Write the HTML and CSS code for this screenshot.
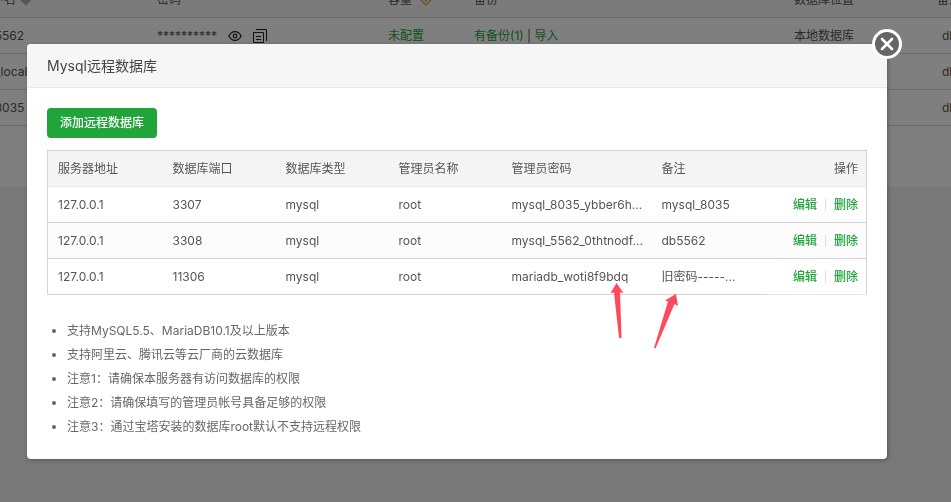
FILE: index.html
```html
<!DOCTYPE html>
<html lang="zh-CN">
<head>
  <meta charset="UTF-8">
  <title>Mysql远程数据库</title>
  <link rel="stylesheet" href="styles.css">
</head>
<body>
  <main class="page">
    <table class="db-list">
      <colgroup>
        <col class="col-name">
        <col class="col-pass">
        <col class="col-quota">
        <col class="col-backup">
        <col class="col-place">
        <col class="col-note">
      </colgroup>
      <thead>
        <tr>
          <th>用户名 <span class="sort">◆</span></th>
          <th>密码</th>
          <th>容量
            <svg class="gem" width="14" height="12" viewBox="0 0 14 12" fill="none" stroke="#d9a860" stroke-width="1.4"><path d="M3.5 .7h7l2.8 3.8L7 11 .7 4.5zM4.500 4.500h5L7 7z"/></svg>
          </th>
          <th>备份</th>
          <th>数据库位置</th>
          <th>备注</th>
        </tr>
      </thead>
      <tbody>
        <tr>
          <td>db5562</td>
          <td>
            <span class="secret">
              <span>**********</span>
              <svg width="14" height="12" viewBox="0 0 14 12" fill="none" stroke="#222" stroke-width="1.2"><path d="M.8 6C2.3 3.2 4.5 1.6 7 1.6S11.7 3.2 13.2 6C11.7 8.8 9.5 10.4 7 10.4S2.3 8.8.8 6z"/><circle cx="7" cy="6" r="1.8"/></svg>
              <svg width="14" height="14" viewBox="0 0 14 14" fill="none" stroke="#222"><path d="M.5 3.5h10v10H.5zM3 .5h10.5V12M3 7.5h5M3 10.5h5"/></svg>
            </span>
          </td>
          <td><a href="#">未配置</a></td>
          <td><a href="#">有备份(1)</a> | <a href="#">导入</a></td>
          <td>本地数据库</td>
          <td class="note">db5562</td>
        </tr>
        <tr>
          <td>db_local</td>
          <td></td>
          <td></td>
          <td></td>
          <td></td>
          <td class="note">db_local</td>
        </tr>
        <tr>
          <td>db8035</td>
          <td></td>
          <td></td>
          <td></td>
          <td></td>
          <td class="note">db8035</td>
        </tr>
      </tbody>
    </table>
  </main>

  <div class="overlay">
    <section class="modal" role="dialog" aria-labelledby="modal-title">
      <h1 class="modal-title" id="modal-title">Mysql远程数据库</h1>
      <button class="close" type="button" aria-label="关闭">
        <svg width="14" height="14" viewBox="0 0 14 14" stroke="#fff" stroke-width="2.6" stroke-linecap="round"><path d="M2 2l10 10M12 2L2 12"/></svg>
      </button>

      <div class="modal-body">
        <button class="add" type="button">添加远程数据库</button>

        <table class="servers">
          <colgroup>
            <col class="col-host">
            <col class="col-short">
            <col class="col-short">
            <col class="col-short">
            <col class="col-password">
            <col>
            <col class="col-action">
          </colgroup>
          <thead>
            <tr>
              <th>服务器地址</th>
              <th>数据库端口</th>
              <th>数据库类型</th>
              <th>管理员名称</th>
              <th>管理员密码</th>
              <th>备注</th>
              <th class="action">操作</th>
            </tr>
          </thead>
          <tbody>
            <tr>
              <td>127.0.0.1</td>
              <td>3307</td>
              <td>mysql</td>
              <td>root</td>
              <td>mysql_8035_ybber6h...</td>
              <td>mysql_8035</td>
              <td class="action"><a href="#">编辑</a><span class="sep"></span><a href="#">删除</a></td>
            </tr>
            <tr>
              <td>127.0.0.1</td>
              <td>3308</td>
              <td>mysql</td>
              <td>root</td>
              <td>mysql_5562_0thtnodf...</td>
              <td>db5562</td>
              <td class="action"><a href="#">编辑</a><span class="sep"></span><a href="#">删除</a></td>
            </tr>
            <tr>
              <td>127.0.0.1</td>
              <td>11306</td>
              <td>mysql</td>
              <td>root</td>
              <td>mariadb_woti8f9bdq</td>
              <td>旧密码-----...</td>
              <td class="action"><a href="#">编辑</a><span class="sep"></span><a href="#">删除</a></td>
            </tr>
          </tbody>
        </table>

        <ul class="tips">
          <li>支持MySQL5.5、MariaDB10.1及以上版本</li>
          <li>支持阿里云、腾讯云等云厂商的云数据库</li>
          <li>注意1：请确保本服务器有访问数据库的权限</li>
          <li>注意2：请确保填写的管理员帐号具备足够的权限</li>
          <li>注意3：通过宝塔安装的数据库root默认不支持远程权限</li>
        </ul>
      </div>

      <svg class="arrows" width="70" height="68" viewBox="0 0 70 68" fill="#ff4a5e">
        <path d="M15.5 0L22.5 10 19 9.5 20.5 54.500Q19.5 56 18 54.5L13 9.5 9.5 10z"/>
        <path d="M75 11L77 23 73.5 21 54.5 65.5 53 65 67 18.5 64 17.5z"/>
      </svg>
    </section>
  </div>
</body>
</html>
```

FILE: styles.css
```css
* {
  box-sizing: border-box;
}
body {
  margin: 0;
  min-height: 100vh;
  overflow: hidden;
  background: #f0f0f0;
  color: #555;
  font: 12px/20px Inter, "Noto Sans CJK SC", sans-serif;
}
a {
  color: #20a53a;
  text-decoration: none;
}
table {
  border-collapse: collapse;
  table-layout: fixed;
}
th, td {
  height: 36px;
  padding: 0 10px;
  font-weight: 400;
  text-align: left;
  white-space: nowrap;
}

/* database list behind the dialog, scrolled by a few pixels */
.page {
  margin: -19px 0 0 -30px;
  padding-bottom: 60px;
  overflow: hidden;
  background: #fff;
}
.db-list {
  width: calc(100% + 100px);
}
.db-list th,
.db-list td {
  padding-top: 2px;
}
.db-list th {
  background: #f6f6f6;
}
.db-list tr {
  border-bottom: 1px solid #d3d3d3;
}
.col-name { width: 177px; }
.col-pass { width: 231px; }
.col-quota { width: 86px; }
.col-backup { width: 320px; }
.col-place { width: 143px; }
.db-list .note {
  padding-left: 15px;
}
.sort {
  color: #aaa;
}
.gem {
  margin-left: 4px;
  vertical-align: middle;
}
.secret {
  display: flex;
  align-items: center;
  gap: 11px;
}

.overlay {
  position: fixed;
  inset: 0;
  display: flex;
  align-items: flex-start;
  padding: 44px 64px 0 27px;
  background: rgba(0, 0, 0, .5);
}
.modal {
  position: relative;
  flex: 1;
  border-radius: 4px;
  background: #fff;
  box-shadow: 1px 1px 4px rgba(0, 0, 0, .3);
}
.modal-title {
  margin: 0;
  padding: 0 20px;
  border-bottom: 1px solid #e8e8e8;
  border-radius: 4px 4px 0 0;
  background: #f6f6f6;
  color: #444;
  font-size: 14px;
  font-weight: 400;
  line-height: 43px;
}
.close {
  position: absolute;
  top: -15px;
  right: -15px;
  display: flex;
  align-items: center;
  justify-content: center;
  width: 30px;
  height: 30px;
  padding: 0;
  border: 3px solid #fff;
  border-radius: 50%;
  background: #666;
}
.modal-body {
  padding: 20px;
}
.add {
  display: block;
  height: 30px;
  padding: 0 13px;
  border: 0;
  border-radius: 4px;
  background: #20a53a;
  color: #fff;
  font: inherit;
  font-weight: 500;
}
.servers {
  width: 100%;
  margin-top: 12px;
  border: 1px solid #d3d3d3;
}
.servers tr {
  border-bottom: 1px solid #d3d3d3;
}
.servers thead tr {
  border-bottom-color: #e4e8ec;
}
.servers th {
  background: #f4f4f4;
}
.servers tbody tr:nth-child(even) {
  background: #fcfcfc;
}
.servers tr:last-child td.action {
  border-bottom: 1px solid #e6e6f0;
}
.col-host { width: 115px; }
.col-short { width: 113px; }
.col-password { width: 150px; }
.col-action { width: 100px; }
.servers .action {
  padding-right: 8px;
  text-align: right;
}
.action a {
  font-weight: 500;
}
.sep {
  display: inline-block;
  height: 12px;
  margin: 0 8px;
  border-left: 1px solid #ddd;
  vertical-align: middle;
}
.tips {
  margin: 24px 0 0;
  padding-left: 20px;
  color: #666;
  line-height: 24px;
}

/* marks over the last row */
.arrows {
  position: absolute;
  top: 239px;
  left: 574px;
  overflow: visible;
}
```
